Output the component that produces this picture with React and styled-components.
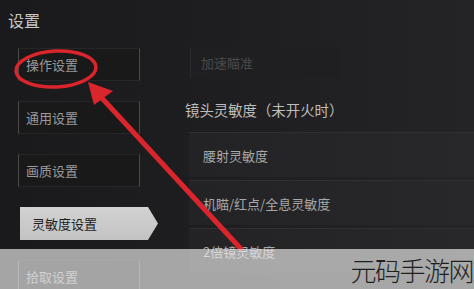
import React from 'react'
import styled, { createGlobalStyle } from 'styled-components'

const GlobalStyle = createGlobalStyle`
  html, body {
    margin: 0;
    padding: 0;
    background: #1c1c1e;
  }
  * {
    box-sizing: border-box;
  }
`

const Screen = styled.div`
  position: relative;
  width: 474px;
  height: 289px;
  overflow: hidden;
  background: linear-gradient(90deg, #1a1a1c 0%, #1e1e20 45%, #242426 100%);
  font-family: 'Noto Sans CJK SC', 'Noto Sans', sans-serif;
`

const Title = styled.div`
  height: 47px;
  padding: 10px 0 0 8px;
  font-size: 16px;
  line-height: 20px;
  color: #c8c8c8;
`

const Body = styled.div`
  display: grid;
  grid-template-columns: 185px 1fr;
`

const Nav = styled.div`
  display: flex;
  flex-direction: column;
  gap: 20px;
  padding: 1px 0 0 18px;
`

const NavItem = styled.div`
  width: 122px;
  height: 33px;
  display: flex;
  align-items: center;
  padding-left: 7px;
  font-size: 13px;
  color: #9a9a9a;
  background: #19191a;
  border-left: 1px solid #4a4a4a;
  border-right: 1px solid #4a4a4a;
  border-top: 1px solid #262627;
  border-bottom: 1px solid #262627;
`

const NavActive = styled.div`
  width: 138px;
  height: 33px;
  margin-left: 2px;
  display: flex;
  align-items: center;
  padding-left: 12px;
  font-size: 13px;
  color: #1d1d1d;
  background: linear-gradient(180deg, #d2d2d2 0%, #c3c3c3 100%);
  clip-path: polygon(0 0, 128px 0, 138px 50%, 128px 100%, 0 100%);
`

const Content = styled.div`
  display: flex;
  flex-direction: column;
`

const FaintBox = styled.div`
  width: 150px;
  height: 31px;
  margin-left: 5px;
  display: flex;
  align-items: center;
  padding-left: 10px;
  font-size: 13px;
  color: #4a4a4a;
  background: #1f1f21;
  border-left: 1px solid #29292b;
`

const SectionLabel = styled.div`
  margin-top: 22px;
  height: 20px;
  font-size: 14.4px;
  line-height: 20px;
  color: #bdbdbd;
`

const Rows = styled.div`
  display: flex;
  flex-direction: column;
  gap: 3px;
  margin-top: 12px;
  margin-left: 4px;
`

const Row = styled.div`
  height: 45px;
  display: flex;
  align-items: center;
  padding-left: 14px;
  font-size: 13px;
  color: #a8a8a8;
  background: linear-gradient(90deg, #232325 0%, #28282a 100%);
  border-top: 1px solid #2f2f31;
`

const Annotation = styled.svg`
  position: absolute;
  left: 0;
  top: 0;
  pointer-events: none;
`

const WatermarkBand = styled.div`
  position: absolute;
  left: 0;
  right: 0;
  top: 249px;
  bottom: 0;
  display: flex;
  justify-content: flex-end;
  align-items: center;
  background: rgba(240, 240, 240, 0.65);
`

const Watermark = styled.div`
  font-size: 26px;
  line-height: 30px;
  letter-spacing: -1.5px;
  color: #1f1f1f;
  margin-right: 1px;
  margin-top: 2px;
  font-weight: 300;
`

const navItems = ['操作设置', '通用设置', '画质设置']
const rows = ['腰射灵敏度', '机瞄/红点/全息灵敏度', '2倍镜灵敏度']

export default function App() {
  return (
    <>
      <GlobalStyle />
      <Screen>
        <Title>设置</Title>
        <Body>
          <Nav>
            {navItems.map((item) => (
              <NavItem key={item}>{item}</NavItem>
            ))}
            <NavActive>灵敏度设置</NavActive>
            <NavItem>拾取设置</NavItem>
          </Nav>
          <Content>
            <FaintBox>加速瞄准</FaintBox>
            <SectionLabel>镜头灵敏度（未开火时）</SectionLabel>
            <Rows>
              {rows.map((row) => (
                <Row key={row}>{row}</Row>
              ))}
            </Rows>
          </Content>
        </Body>

        <Annotation width="474" height="289" viewBox="0 0 474 289">
          <ellipse
            cx="56"
            cy="69"
            rx="40"
            ry="18"
            fill="none"
            stroke="#d9252b"
            strokeWidth="3.5"
            transform="rotate(-3 56 69)"
          />
          <line
            x1="100"
            y1="96"
            x2="242"
            y2="250"
            stroke="#d9252b"
            strokeWidth="5"
            strokeLinecap="butt"
          />
          <polygon points="88,82 94,105 113,91" fill="#d9252b" />
        </Annotation>

        <WatermarkBand>
          <Watermark>元码手游网</Watermark>
        </WatermarkBand>
      </Screen>
    </>
  )
}
